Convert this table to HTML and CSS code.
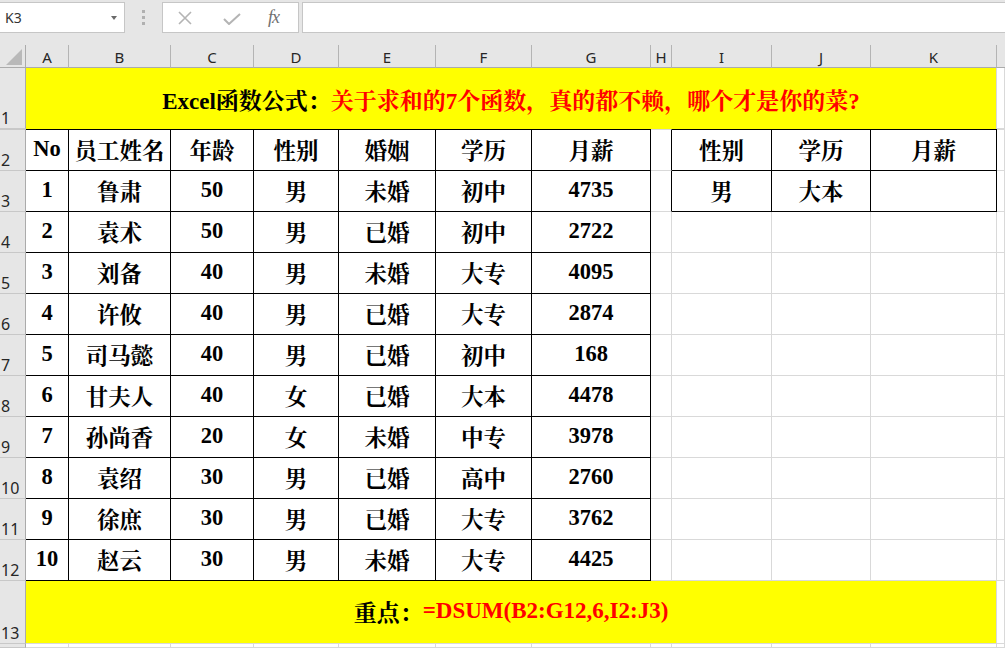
FILE: index.html
```html
<!DOCTYPE html>
<html>
<head>
<meta charset="utf-8">
<link rel="stylesheet" href="styles.css">
</head>
<body>
<div class="fbar">
  <div class="namebox"><span>K3</span><span class="dd"></span></div>
  <div class="dots"><i></i><i></i><i></i></div>
  <div class="fxbox">
    <svg class="ico" width="16" height="14" viewBox="0 0 16 14"><path d="M2 1 L14 13 M14 1 L2 13" stroke="#b4b4b4" stroke-width="1.6" fill="none"/></svg>
    <svg class="ico" width="18" height="12" viewBox="0 0 18 12"><path d="M1 6 L6 11 L17 1" stroke="#b4b4b4" stroke-width="2" fill="none"/></svg>
    <span class="fx">fx</span>
  </div>
  <div class="finput"></div>
</div>
<div class="sheet">
  <!-- column headers -->
  <div class="corner"><span class="tri"></span></div>
  <div class="ch">A</div><div class="ch">B</div><div class="ch">C</div><div class="ch">D</div><div class="ch">E</div><div class="ch">F</div><div class="ch">G</div><div class="ch">H</div><div class="ch">I</div><div class="ch">J</div><div class="ch">K</div><div class="ch last"></div>

  <!-- row 1 -->
  <div class="rh">1</div>
  <div class="title"><span class="blk">Excel函数公式：</span><span class="red">关于求和的7个函数，真的都不赖，哪个才是你的菜?</span></div>
  <div class="c"></div>

  <!-- row 2 -->
  <div class="rh top">2</div>
  <div class="c t top">No</div><div class="c t top">员工姓名</div><div class="c t top">年龄</div><div class="c t top">性别</div><div class="c t top">婚姻</div><div class="c t top">学历</div><div class="c t top">月薪</div>
  <div class="c hl topg"></div>
  <div class="c t top">性别</div><div class="c t top">学历</div><div class="c t top">月薪</div>
  <div class="c topg"></div>

  <!-- row 3 -->
  <div class="rh">3</div>
  <div class="c t">1</div><div class="c t">鲁肃</div><div class="c t">50</div><div class="c t">男</div><div class="c t">未婚</div><div class="c t">初中</div><div class="c t">4735</div>
  <div class="c hl"></div>
  <div class="c t">男</div><div class="c t">大本</div><div class="c t"></div>
  <div class="c"></div>

  <!-- row 4 -->
  <div class="rh">4</div>
  <div class="c t">2</div><div class="c t">袁术</div><div class="c t">50</div><div class="c t">男</div><div class="c t">已婚</div><div class="c t">初中</div><div class="c t">2722</div>
  <div class="c"></div><div class="c"></div><div class="c"></div><div class="c"></div><div class="c"></div>

  <!-- row 5 -->
  <div class="rh">5</div>
  <div class="c t">3</div><div class="c t">刘备</div><div class="c t">40</div><div class="c t">男</div><div class="c t">未婚</div><div class="c t">大专</div><div class="c t">4095</div>
  <div class="c"></div><div class="c"></div><div class="c"></div><div class="c"></div><div class="c"></div>

  <!-- row 6 -->
  <div class="rh">6</div>
  <div class="c t">4</div><div class="c t">许攸</div><div class="c t">40</div><div class="c t">男</div><div class="c t">已婚</div><div class="c t">大专</div><div class="c t">2874</div>
  <div class="c"></div><div class="c"></div><div class="c"></div><div class="c"></div><div class="c"></div>

  <!-- row 7 -->
  <div class="rh">7</div>
  <div class="c t">5</div><div class="c t">司马懿</div><div class="c t">40</div><div class="c t">男</div><div class="c t">已婚</div><div class="c t">初中</div><div class="c t">168</div>
  <div class="c"></div><div class="c"></div><div class="c"></div><div class="c"></div><div class="c"></div>

  <!-- row 8 -->
  <div class="rh">8</div>
  <div class="c t">6</div><div class="c t">甘夫人</div><div class="c t">40</div><div class="c t">女</div><div class="c t">已婚</div><div class="c t">大本</div><div class="c t">4478</div>
  <div class="c"></div><div class="c"></div><div class="c"></div><div class="c"></div><div class="c"></div>

  <!-- row 9 -->
  <div class="rh">9</div>
  <div class="c t">7</div><div class="c t">孙尚香</div><div class="c t">20</div><div class="c t">女</div><div class="c t">未婚</div><div class="c t">中专</div><div class="c t">3978</div>
  <div class="c"></div><div class="c"></div><div class="c"></div><div class="c"></div><div class="c"></div>

  <!-- row 10 -->
  <div class="rh">10</div>
  <div class="c t">8</div><div class="c t">袁绍</div><div class="c t">30</div><div class="c t">男</div><div class="c t">已婚</div><div class="c t">高中</div><div class="c t">2760</div>
  <div class="c"></div><div class="c"></div><div class="c"></div><div class="c"></div><div class="c"></div>

  <!-- row 11 -->
  <div class="rh">11</div>
  <div class="c t">9</div><div class="c t">徐庶</div><div class="c t">30</div><div class="c t">男</div><div class="c t">已婚</div><div class="c t">大专</div><div class="c t">3762</div>
  <div class="c"></div><div class="c"></div><div class="c"></div><div class="c"></div><div class="c"></div>

  <!-- row 12 -->
  <div class="rh">12</div>
  <div class="c t">10</div><div class="c t">赵云</div><div class="c t">30</div><div class="c t">男</div><div class="c t">未婚</div><div class="c t">大专</div><div class="c t">4425</div>
  <div class="c"></div><div class="c"></div><div class="c"></div><div class="c"></div><div class="c"></div>

  <!-- row 13 -->
  <div class="rh">13</div>
  <div class="c note"><span class="blk">重点：</span><span class="red">=DSUM(B2:G12,6,I2:J3)</span></div>
  <div class="c"></div>

  <!-- row 14 -->
  <div class="rh"></div>
  <div class="c"></div><div class="c"></div><div class="c"></div><div class="c"></div><div class="c"></div><div class="c"></div><div class="c"></div><div class="c"></div><div class="c"></div><div class="c"></div><div class="c"></div><div class="c"></div>
</div>
</body>
</html>
```

FILE: styles.css
```css
html, body {
  margin: 0;
  padding: 0;
}
body {
  width: 1005px;
  height: 648px;
  overflow: hidden;
  background: #e6e6e6;
  font-family: "Liberation Serif", "Noto Serif CJK SC", "Noto Sans CJK SC", serif;
}

/* formula bar */
.fbar {
  height: 45px;
  box-sizing: border-box;
  padding-top: 2px;
  display: flex;
  align-items: flex-start;
}
.namebox {
  width: 125px;
  height: 31px;
  box-sizing: border-box;
  border: 1px solid #c6c6c6;
  border-left: none;
  background: #fff;
  display: flex;
  align-items: center;
  justify-content: space-between;
  padding: 0 7px 0 5px;
  font-family: "Noto Sans", "Liberation Sans", sans-serif;
  font-size: 14px;
  color: #333;
}
.dd {
  width: 0;
  height: 0;
  border-left: 3.5px solid transparent;
  border-right: 3.5px solid transparent;
  border-top: 4px solid #6a6a6a;
}
.dots {
  width: 37px;
  height: 31px;
  display: flex;
  flex-direction: column;
  align-items: center;
  justify-content: center;
  gap: 3px;
}
.dots i {
  display: block;
  width: 3px;
  height: 3px;
  background: #b0b0b0;
}
.fxbox {
  width: 137px;
  height: 31px;
  box-sizing: border-box;
  border: 1px solid #c6c6c6;
  background: #fff;
  display: flex;
  align-items: center;
  padding-left: 14px;
}
.fxbox .ico:first-child { margin-right: 30px; }
.fxbox .ico:nth-child(2) { margin-right: 27px; margin-top: 3px; }
.fx {
  font-family: "Liberation Serif", serif;
  font-style: italic;
  font-size: 18px;
  color: #707070;
  letter-spacing: -1px;
}
.finput {
  flex: 1;
  height: 31px;
  margin-left: 3px;
  box-sizing: border-box;
  border: 1px solid #c6c6c6;
  border-right: none;
  background: #fff;
}

/* sheet grid */
.sheet {
  display: grid;
  grid-template-columns: 26px 43px 102px 83px 85px 97px 96px 119px 21px 100px 99px 126px 1fr;
  grid-template-rows: 23px 61px 42px repeat(10, 41px) 63px 4px;
  background: #fff;
}
.corner {
  background: #e6e6e6;
  border-right: 1px solid #ababab;
  border-bottom: 1px solid #ababab;
  box-sizing: border-box;
  position: relative;
}
.tri {
  position: absolute;
  right: 3px;
  bottom: 2px;
  width: 0;
  height: 0;
  border-left: 16px solid transparent;
  border-bottom: 16px solid #b9b9b9;
}
.ch {
  background: #e6e6e6;
  border-right: 1px solid #b4b4b4;
  border-bottom: 1px solid #ababab;
  box-sizing: border-box;
  display: flex;
  align-items: center;
  justify-content: center;
  font-family: "Noto Sans", "Liberation Sans", sans-serif;
  font-size: 15px;
  color: #262626;
  padding-top: 1px;
}
.ch.last { border-right: none; }
.rh {
  background: #e6e6e6;
  border-right: 1px solid #ababab;
  border-bottom: 1px solid #c8c8c8;
  box-sizing: border-box;
  display: flex;
  align-items: flex-end;
  padding: 0 0 1px 1px;
  font-family: "Noto Sans", "Liberation Sans", sans-serif;
  font-size: 16px;
  line-height: 18px;
  color: #262626;
}
.rh.top { border-top: 1px solid #c8c8c8; }

.c {
  box-sizing: border-box;
  border-right: 1px solid #d9d9d9;
  border-bottom: 1px solid #d9d9d9;
  display: flex;
  align-items: center;
  justify-content: center;
  font-weight: bold;
  font-size: 22.5px;
  color: #000;
  white-space: nowrap;
  padding-bottom: 2px;
}
.c.t {
  border-right-color: #000;
  border-bottom-color: #000;
}
.c.top { border-top: 1px solid #000; }
.c.topg { border-top: 1px solid #d9d9d9; }
.c.hl { border-right-color: #000; }

.title {
  grid-column: 2 / span 11;
  background: #ffff00;
  border-right: 1px solid #d9d9d9;
  box-sizing: border-box;
  display: flex;
  align-items: center;
  justify-content: center;
  font-weight: bold;
  font-size: 23px;
  white-space: nowrap;
  padding-top: 1px;
}
.note {
  grid-column: 2 / span 11;
  background: #ffff00;
  font-size: 23px;
  padding-bottom: 2px;
}
.blk { color: #000; }
.red { color: #ff0000; }
```
